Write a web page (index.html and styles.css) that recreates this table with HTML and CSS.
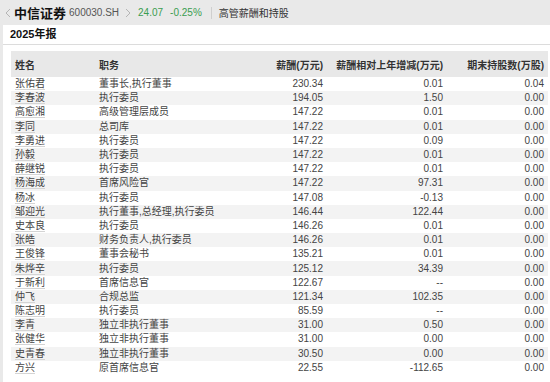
FILE: index.html
```html
<!DOCTYPE html>
<html lang="zh-CN">
<head>
    <meta charset="UTF-8">
    <title>中信证券 高管薪酬和持股</title>
    <link rel="stylesheet" href="styles.css">
</head>
<body>
    <div class="topbar">
        <svg class="chev" width="6" height="10" viewBox="0 0 6 10"><path d="M5 1 L1 5 L5 9" fill="none" stroke="#b5b5b5" stroke-width="1"/></svg>
        <span class="stock-name">中信证券</span>
        <span class="stock-code">600030.SH</span>
        <svg class="chev" width="6" height="10" viewBox="0 0 6 10"><path d="M1 1 L5 5 L1 9" fill="none" stroke="#b5b5b5" stroke-width="1"/></svg>
        <span class="price">24.07</span>
        <span class="price">-0.25%</span>
        <span class="divider"></span>
        <span class="page-title">高管薪酬和持股</span>
    </div>

    <div class="panel">
        <div class="panel-head">2025年报</div>
        <table class="grid">
            <colgroup>
                <col class="c-name">
                <col class="c-role">
                <col class="c-pay">
                <col class="c-diff">
                <col class="c-hold">
            </colgroup>
            <thead>
                <tr>
                    <th>姓名</th>
                    <th>职务</th>
                    <th class="num">薪酬(万元)</th>
                    <th class="num">薪酬相对上年增减(万元)</th>
                    <th class="num">期末持股数(万股)</th>
                </tr>
            </thead>
            <tbody>
                <tr><td><a>张佑君</a></td><td>董事长,执行董事</td><td class="num">230.34</td><td class="num">0.01</td><td class="num">0.04</td></tr>
                <tr><td><a>李春波</a></td><td>执行委员</td><td class="num">194.05</td><td class="num">1.50</td><td class="num">0.00</td></tr>
                <tr><td><a>高愈湘</a></td><td>高级管理层成员</td><td class="num">147.22</td><td class="num">0.01</td><td class="num">0.00</td></tr>
                <tr><td><a>李同</a></td><td>总司库</td><td class="num">147.22</td><td class="num">0.01</td><td class="num">0.00</td></tr>
                <tr><td><a>李勇进</a></td><td>执行委员</td><td class="num">147.22</td><td class="num">0.09</td><td class="num">0.00</td></tr>
                <tr><td><a>孙毅</a></td><td>执行委员</td><td class="num">147.22</td><td class="num">0.01</td><td class="num">0.00</td></tr>
                <tr><td><a>薛继锐</a></td><td>执行委员</td><td class="num">147.22</td><td class="num">0.01</td><td class="num">0.00</td></tr>
                <tr><td><a>杨海成</a></td><td>首席风险官</td><td class="num">147.22</td><td class="num">97.31</td><td class="num">0.00</td></tr>
                <tr><td><a>杨冰</a></td><td>执行委员</td><td class="num">147.08</td><td class="num">-0.13</td><td class="num">0.00</td></tr>
                <tr><td><a>邹迎光</a></td><td>执行董事,总经理,执行委员</td><td class="num">146.44</td><td class="num">122.44</td><td class="num">0.00</td></tr>
                <tr><td><a>史本良</a></td><td>执行委员</td><td class="num">146.26</td><td class="num">0.01</td><td class="num">0.00</td></tr>
                <tr><td><a>张皓</a></td><td>财务负责人,执行委员</td><td class="num">146.26</td><td class="num">0.01</td><td class="num">0.00</td></tr>
                <tr><td><a>王俊锋</a></td><td>董事会秘书</td><td class="num">135.21</td><td class="num">0.01</td><td class="num">0.00</td></tr>
                <tr><td><a>朱烨辛</a></td><td>执行委员</td><td class="num">125.12</td><td class="num">34.39</td><td class="num">0.00</td></tr>
                <tr><td><a>于新利</a></td><td>首席信息官</td><td class="num">122.67</td><td class="num">--</td><td class="num">0.00</td></tr>
                <tr><td><a>仲飞</a></td><td>合规总监</td><td class="num">121.34</td><td class="num">102.35</td><td class="num">0.00</td></tr>
                <tr><td><a>陈志明</a></td><td>执行委员</td><td class="num">85.59</td><td class="num">--</td><td class="num">0.00</td></tr>
                <tr><td><a>李青</a></td><td>独立非执行董事</td><td class="num">31.00</td><td class="num">0.50</td><td class="num">0.00</td></tr>
                <tr><td><a>张健华</a></td><td>独立非执行董事</td><td class="num">31.00</td><td class="num">0.00</td><td class="num">0.00</td></tr>
                <tr><td><a>史青春</a></td><td>独立非执行董事</td><td class="num">30.50</td><td class="num">0.00</td><td class="num">0.00</td></tr>
                <tr><td><a>方兴</a></td><td>原首席信息官</td><td class="num">22.55</td><td class="num">-112.65</td><td class="num">0.00</td></tr>
            </tbody>
        </table>
    </div>
</body>
</html>
```

FILE: styles.css
```css
body {
    margin: 0;
    background: #e9e9e9;
    font-family: "Liberation Sans", "Noto Sans CJK SC", sans-serif;
    font-size: 10px;
    color: #444;
    overflow: hidden;
}
.topbar {
    height: 25px;
    display: flex;
    align-items: center;
    padding-left: 5px;
    white-space: nowrap;
}
.chev {
    flex: none;
}
.stock-name {
    font-size: 13px;
    font-weight: bold;
    color: #111;
    margin-left: 3px;
}
.stock-code {
    font-size: 10px;
    color: #555;
    margin-left: 3px;
    margin-right: 6px;
}
.price {
    color: #3a9d50;
    font-size: 10px;
    margin-left: 7px;
}
.divider {
    width: 1px;
    height: 12px;
    background: #cfcfcf;
    margin: 0 7px 0 9px;
}
.page-title {
    font-size: 10px;
    color: #333;
}
.panel {
    margin-left: 3px;
    background: white;
    min-height: 357px;
}
.panel-head {
    height: 19px;
    line-height: 19px;
    padding-left: 7px;
    font-size: 11px;
    font-weight: bold;
    color: #111;
    border-bottom: 1px solid #dcdcdc;
}
.grid {
    margin: 6px 0 0 8px;
    width: 537px;
    border-collapse: collapse;
    table-layout: fixed;
}
.c-name { width: 84px; }
.c-role { width: 141px; }
.c-pay { width: 91px; }
.c-diff { width: 120px; }
.c-hold { width: 101px; }
.grid th {
    height: 26px;
    background: #e8e8e8;
    font-weight: bold;
    color: #333;
    text-align: left;
    padding: 0 4px;
}
.grid td {
    height: 14.2px;
    padding: 0 4px;
    line-height: 12px;
    white-space: nowrap;
}
.grid tbody tr:nth-child(even) td {
    background: #f3f3f3;
}
.grid .num {
    text-align: right;
}
.grid a {
    color: #444;
    border-bottom: 1px solid #d4d4d4;
}
```
